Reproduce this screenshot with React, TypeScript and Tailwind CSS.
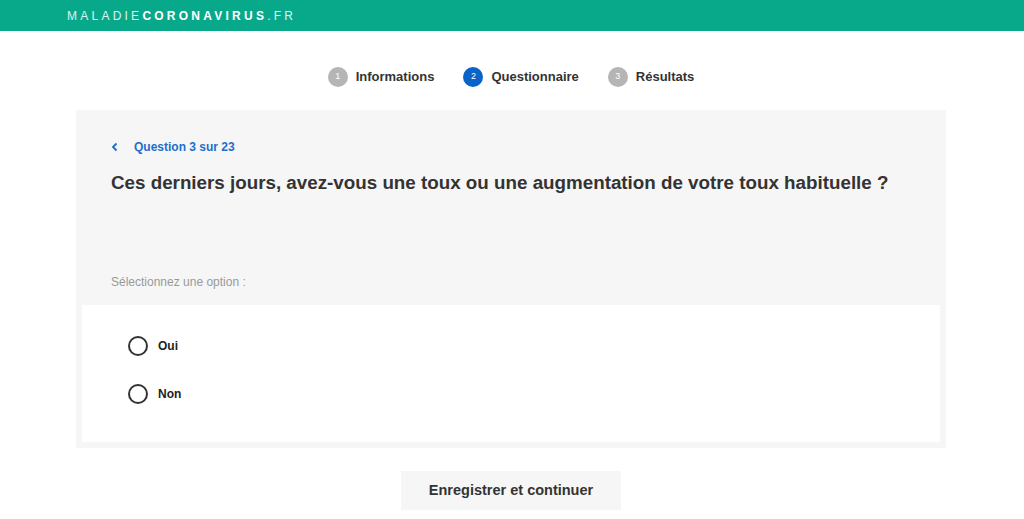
import React, { useState } from 'react';

const steps = [
  { n: 1, label: 'Informations', active: false },
  { n: 2, label: 'Questionnaire', active: true },
  { n: 3, label: 'Résultats', active: false },
];

const options = ['Oui', 'Non'];

const App: React.FC = () => {
  const [choice, setChoice] = useState<string | null>(null);

  return (
    <div className="min-h-screen bg-white font-['Liberation_Sans',Arial,sans-serif] text-[#333]">
      {/* Header */}
      <header className="h-[31px] bg-[#08a98b] flex items-center pl-[67px]">
        <span className="text-[12px] tracking-[0.27em] text-white/85 leading-none">
          MALADIE<span className="font-bold text-white">CORONAVIRUS</span>.FR
        </span>
      </header>

      {/* Stepper */}
      <nav className="flex justify-center items-center gap-[29px] h-[79px] pt-[13px] pr-[2px]">
        {steps.map((s) => (
          <div key={s.n} className="flex items-center gap-[8px]">
            <span
              className={`w-[20px] h-[20px] rounded-full flex items-center justify-center text-[9px] text-white ${
                s.active ? 'bg-[#0a64c8]' : 'bg-[#b5b5b5]'
              }`}
            >
              {s.n}
            </span>
            <span className="text-[13px] font-bold text-[#333]">{s.label}</span>
          </div>
        ))}
      </nav>

      {/* Question card */}
      <main className="ml-[76px] w-[870px] bg-[#f6f6f6] px-[6px] pb-[6px]">
        <div className="px-[29px] pt-[28px] h-[195px] flex flex-col">
          <button className="flex items-center gap-[15px] text-[#1b6fcb] text-[12px] font-bold self-start">
            <svg width="8" height="10" viewBox="0 0 8 10" fill="none" stroke="currentColor" strokeWidth="1.8">
              <path d="M5.5 1.5 L2 5 L5.5 8.5" />
            </svg>
            Question 3 sur 23
          </button>
          <h1 className="mt-[15px] text-[18.8px] font-bold text-[#333] leading-[24px]">
            Ces derniers jours, avez-vous une toux ou une augmentation de votre toux habituelle ?
          </h1>
          <p className="mt-auto mb-[14px] text-[12px] text-[#999]">Sélectionnez une option :</p>
        </div>

        <div className="bg-white h-[137px] pl-[46px] pt-[31px] flex flex-col gap-[28px]">
          {options.map((o) => (
            <label key={o} className="flex items-center gap-[10px] cursor-pointer">
              <span
                onClick={() => setChoice(o)}
                className="w-[20px] h-[20px] rounded-full border-[2px] border-[#333] flex items-center justify-center"
              >
                {choice === o && <span className="w-[10px] h-[10px] rounded-full bg-[#333]" />}
              </span>
              <span className="text-[12px] font-bold text-[#222]">{o}</span>
            </label>
          ))}
        </div>
      </main>

      {/* Submit */}
      <div className="flex justify-center mt-[23px]">
        <button className="w-[220px] h-[39px] bg-[#f6f6f6] text-[14.5px] font-bold text-[#333] ml-[-2px]">
          Enregistrer et continuer
        </button>
      </div>
    </div>
  );
};

export default App;
